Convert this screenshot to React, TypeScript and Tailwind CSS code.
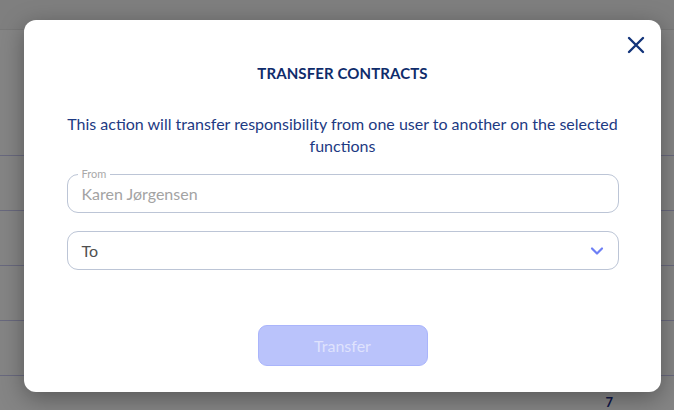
import React from "react";

const rows = [0, 1, 2, 3];

const TransferModal = () => {
  return (
    <div className="relative w-[674px] h-[410px] overflow-hidden bg-white font-['Lato',sans-serif]">
      {/* page behind the dialog */}
      <div className="flex flex-col">
        <div className="h-[30px] bg-[#f4f4f4] border-b border-[#e6e6e6]" />
        <div className="h-[125px]" />
        {rows.map((r) => (
          <div key={r} className="h-[55px] border-t border-[#c9c9f2]" />
        ))}
        <div className="h-[40px] border-t border-[#c9c9f2] flex justify-end pr-[61px] pt-[18px]">
          <span className="text-[#1c2f8a] text-[13px] leading-[16px] font-bold">7</span>
        </div>
      </div>

      {/* overlay */}
      <div className="absolute inset-0 bg-black/[0.48] flex pl-[24px] pt-[20px]">
        <div className="relative w-[637px] h-[372px] bg-white rounded-[12px] shadow-[0_6px_24px_rgba(0,0,0,0.35)] flex flex-col items-center">
          <button className="absolute right-[15px] top-[15px] text-[#13347a]">
            <svg width="20" height="20" viewBox="0 0 20 20" fill="none">
              <path d="M3 3L17 17M17 3L3 17" stroke="currentColor" strokeWidth="2.4" strokeLinecap="round" />
            </svg>
          </button>

          <h2 className="mt-[43px] text-[15px] leading-[20px] font-bold text-[#0f2c6b] tracking-[0.1px]">
            TRANSFER CONTRACTS
          </h2>

          <p className="mt-[30px] w-[560px] text-center text-[16px] leading-[22px] text-[#1d3a83]">
            This action will transfer responsibility from one user to another on the selected functions
          </p>

          <div className="mt-[17px] w-[552px] flex flex-col gap-[18px]">
            <div className="relative h-[39px] rounded-[11px] border border-[#bcc5d6] flex items-center px-[14px]">
              <span className="absolute -top-[8px] left-[10px] px-[4px] bg-white text-[11px] leading-[14px] text-[#a9a9a9]">
                From
              </span>
              <span className="text-[16px] text-[#a3a3a3]">Karen Jørgensen</span>
            </div>

            <div className="h-[39px] rounded-[11px] border border-[#bcc5d6] flex items-center justify-between pl-[14px] pr-[14px]">
              <span className="text-[16px] text-[#4f4f4f]">To</span>
              <svg width="14" height="10" viewBox="0 0 14 10" fill="none">
                <path d="M2 2.5L7 7.5L12 2.5" stroke="#6d7ff5" strokeWidth="2.2" strokeLinecap="round" strokeLinejoin="round" />
              </svg>
            </div>
          </div>

          <button
            disabled
            className="mt-[55px] w-[170px] h-[41px] rounded-[9px] bg-[#bac3fb] border border-[#aab5fb] text-[16px] text-[#dfe2fd]"
          >
            Transfer
          </button>
        </div>
      </div>
    </div>
  );
};

export default function App() {
  return <TransferModal />;
}
